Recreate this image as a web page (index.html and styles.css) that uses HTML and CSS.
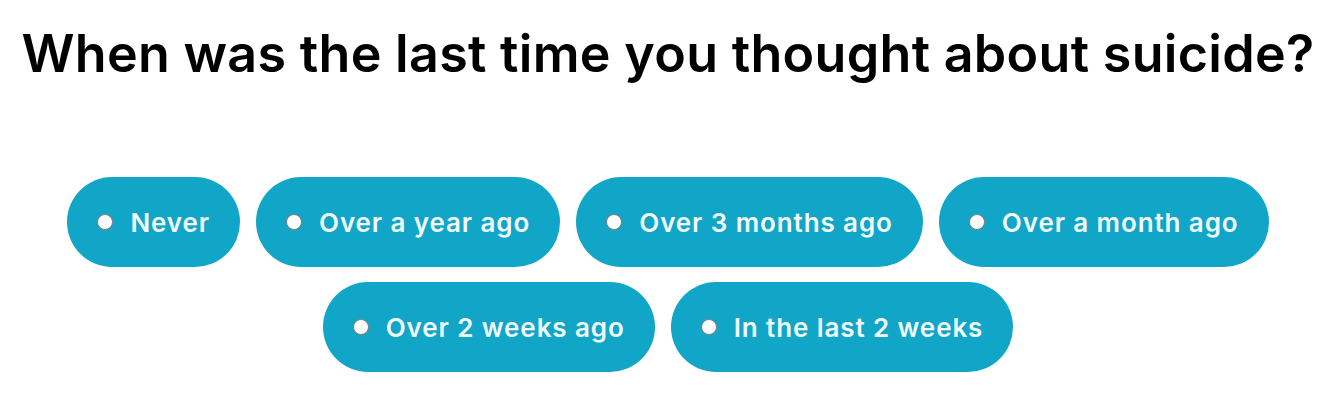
FILE: index.html
```html
<!DOCTYPE html>
<html lang="en">
<head>
<meta charset="utf-8">
<link rel="stylesheet" href="styles.css">
</head>
<body>
<main class="question">
  <h1 class="title">When was the last time you thought about suicide?</h1>
  <div class="options">
    <label class="option"><span class="radio"></span><span class="label">Never</span></label>
    <label class="option"><span class="radio"></span><span class="label">Over a year ago</span></label>
    <label class="option"><span class="radio"></span><span class="label">Over 3 months ago</span></label>
    <label class="option"><span class="radio"></span><span class="label">Over a month ago</span></label>
    <label class="option"><span class="radio"></span><span class="label">Over 2 weeks ago</span></label>
    <label class="option"><span class="radio"></span><span class="label">In the last 2 weeks</span></label>
  </div>
</main>
</body>
</html>
```
FILE: styles.css
```css
html, body {
  margin: 0;
  padding: 0;
  background: #ffffff;
}
body {
  font-family: "Inter", "Noto Sans", sans-serif;
}
.question {
  display: flex;
  flex-direction: column;
  align-items: center;
}
.title {
  margin: 22px 0 0;
  font-size: 52px;
  font-weight: 600;
  letter-spacing: 0.3px;
  line-height: 64px;
  color: #000;
  white-space: nowrap;
}
.options {
  margin-top: 91px;
  display: flex;
  flex-wrap: wrap;
  justify-content: center;
  gap: 15px 16px;
  width: 100%;
}
.option {
  display: flex;
  align-items: center;
  height: 90px;
  padding: 0 30px;
  box-sizing: border-box;
  border-radius: 45px;
  background: #11a6c7;
  color: #f0fafc;
  font-size: 26px;
  font-weight: 600;
  letter-spacing: 0.9px;
}
.radio {
  width: 14px;
  height: 14px;
  border-radius: 50%;
  background: #fff;
  border: 1.5px solid #8a7a78;
  margin-right: 17px;
  flex: none;
}
```
